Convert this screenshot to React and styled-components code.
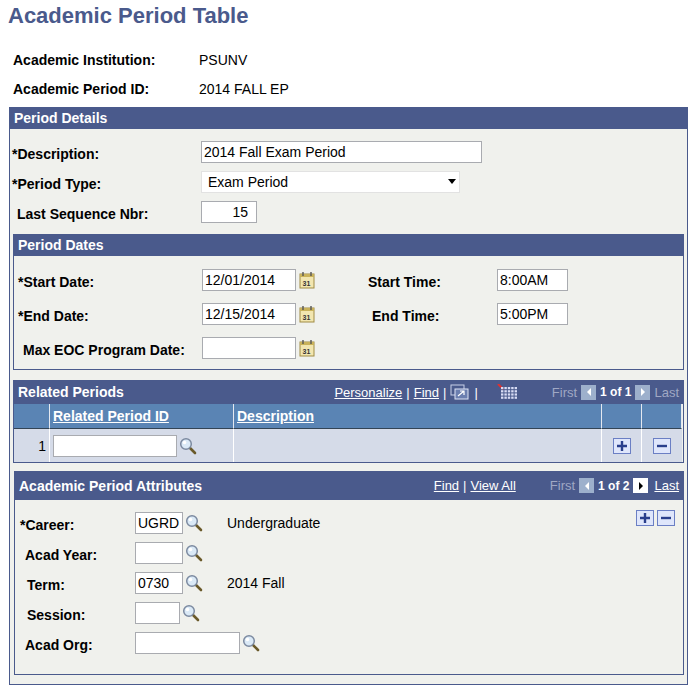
import React from "react";
import styled, { createGlobalStyle } from "styled-components";

const Global = createGlobalStyle`
  body { margin: 0; background: #fff; font-family: "Liberation Sans", Arial, sans-serif; color: #000; }
`;

const Page = styled.div`
  padding: 2px 0 0 9px;
  width: 679px;
`;

const Title = styled.h1`
  margin: 0 0 0 -1px;
  font-size: 22px;
  font-weight: bold;
  color: #4a5a8c;
  line-height: 28px;
`;

const KeyGrid = styled.div`
  display: grid;
  grid-template-columns: 186px auto;
  row-gap: 10px;
  padding: 21px 0 8px 4px;
  font-size: 14px;
  line-height: 19px;
`;

const Bold = styled.span`
  font-weight: bold;
`;

const Panel = styled.div`
  border: 1px solid #4a5a8c;
  border-top: none;
  background: #f0f1ed;
  margin: ${(p) => p.$margin || "0"};
  padding-bottom: ${(p) => p.$pb || "0"};
`;

const Bar = styled.div`
  background: #4a5a8c;
  color: #fff;
  font-weight: bold;
  font-size: 14px;
  height: ${(p) => p.$h || 22}px;
  display: flex;
  align-items: center;
  padding: 0 4px;
  font-size: 14px;
`;

const BarRight = styled.div`
  margin-left: auto;
  display: flex;
  align-items: center;
  gap: 4px;
  font-weight: normal;
  font-size: 13px;
`;

const Link = styled.span`
  text-decoration: underline;
  color: ${(p) => p.$c || "#fff"};
`;

const Dim = styled.span`
  color: #a0a8c4;
`;

const Form = styled.div`
  display: grid;
  grid-template-columns: ${(p) => p.$cols};
  align-items: center;
  row-gap: ${(p) => p.$gap || 8}px;
  padding: ${(p) => p.$pad};
  font-size: 14px;
`;

const Label = styled.div`
  font-weight: bold;
  padding-left: ${(p) => p.$indent || 0}px;
  padding-top: 4px;
`;

const Input = styled.div`
  width: ${(p) => p.$w}px;
  height: 22px;
  box-sizing: border-box;
  border: 1px solid #a9abb0;
  background: #fff;
  padding: 0 2px;
  display: flex;
  align-items: center;
  justify-content: ${(p) => (p.$right ? "flex-end" : "flex-start")};
  padding-right: ${(p) => (p.$right ? 8 : 2)}px;
  font-size: 14px;
`;

const Select = styled(Input)`
  border-color: #e2e2e2;
  padding-left: 6px;
  justify-content: space-between;
`;

const Cell = styled.div`
  display: flex;
  align-items: center;
  gap: ${(p) => p.$gap || 3}px;
`;

const Inner = styled.div`
  margin: 0 3px 0 3px;
  border: 1px solid #4a5a8c;
  border-top: none;
`;

const GridTable = styled.div`
  display: grid;
  grid-template-columns: 36px 184px 368px 40px 40px;
  font-size: 14px;
`;

const Th = styled.div`
  background: #5a84b4;
  height: 24px;
  border-right: 1px solid #e4e8f0;
  border-bottom: 1px solid #345;
  display: flex;
  align-items: center;
  padding-left: 3px;
  font-weight: bold;
  &:last-child { border-right: none; }
`;

const Td = styled.div`
  background: #d5dbe8;
  height: 33px;
  border-right: 1px solid #fff;
  display: flex;
  align-items: center;
  justify-content: ${(p) => p.$j || "flex-start"};
  padding: 0 3px;
  &:last-child { border-right: none; }
`;

const SqBtn = styled.div`
  width: 18px;
  height: 16px;
  box-sizing: border-box;
  border: 1px solid #6b7fc4;
  background: #dfe6fb;
  display: flex;
  align-items: center;
  justify-content: center;
`;

const NavBtn = styled.div`
  width: 15px;
  height: 15px;
  background: ${(p) => (p.$on ? "#fff" : "#9db0cc")};
  display: flex;
  align-items: center;
  justify-content: center;
`;

const Lookup = () => (
  <svg width="18" height="18" viewBox="0 0 18 18">
    <line x1="10" y1="10" x2="16" y2="16" stroke="#6a5a2a" strokeWidth="2.6" strokeLinecap="round" />
    <circle cx="7" cy="7" r="5.3" fill="#dbeaf7" stroke="#7c8aa0" strokeWidth="1.5" />
    <circle cx="5.5" cy="5.5" r="1.8" fill="#fff" />
  </svg>
);

const Cal = () => (
  <svg width="16" height="18" viewBox="0 0 16 18">
    <rect x="1" y="3" width="14" height="14" fill="#f2e6b0" stroke="#a08c44" />
    <rect x="1" y="3" width="14" height="3" fill="#c9b25a" />
    <line x1="4" y1="1" x2="4" y2="5" stroke="#555" strokeWidth="1.4" />
    <line x1="12" y1="1" x2="12" y2="5" stroke="#555" strokeWidth="1.4" />
    <text x="3.5" y="15" fontSize="7" fontWeight="bold" fill="#333" fontFamily="Liberation Sans, sans-serif">31</text>
  </svg>
);

const Plus = () => (
  <SqBtn>
    <svg width="10" height="10" viewBox="0 0 10 10">
      <path d="M5 0v10M0 5h10" stroke="#2a3f8c" strokeWidth="2.4" />
    </svg>
  </SqBtn>
);
const Minus = () => (
  <SqBtn>
    <svg width="10" height="10" viewBox="0 0 10 10">
      <path d="M0 5h10" stroke="#2a3f8c" strokeWidth="2.4" />
    </svg>
  </SqBtn>
);

const Arrow = ({ dir, on }) => (
  <NavBtn $on={on}>
    <svg width="8" height="10" viewBox="0 0 8 10">
      <path d={dir === "l" ? "M6 1L2 5l4 4z" : "M2 1l4 4-4 4z"} fill={on ? "#000" : "#fff"} />
    </svg>
  </NavBtn>
);

const Date = ({ v }) => (
  <Cell>
    <Input $w={94}>{v}</Input>
    <Cal />
  </Cell>
);

const Look = ({ w, v, text }) => (
  <Cell $gap={2}>
    <Input $w={w}>{v}</Input>
    <Lookup />
    {text && <span style={{ marginLeft: 22 }}>{text}</span>}
  </Cell>
);

export default function App() {
  return (
    <Page>
      <Global />
      <Title>Academic Period Table</Title>
      <KeyGrid>
        <Bold>Academic Institution:</Bold>
        <span>PSUNV</span>
        <Bold>Academic Period ID:</Bold>
        <span>2014 FALL EP</span>
      </KeyGrid>
      <Panel $pb="5px">
        <Bar>Period Details</Bar>
        <Form $cols="189px auto" $pad="12px 0 11px 2px">
          <Label>*Description:</Label>
          <Input $w={281}>2014 Fall Exam Period</Input>
          <Label>*Period Type:</Label>
          <Select $w={259}>
            Exam Period
            <svg width="10" height="6" viewBox="0 0 10 6"><path d="M1 0h8L5 5z" fill="#000" /></svg>
          </Select>
          <Label $indent={5}>Last Sequence Nbr:</Label>
          <Input $w={56} $right>15</Input>
        </Form>
        <Inner style={{ marginBottom: 10 }}>
          <Bar>Period Dates</Bar>
          <Form $cols="184px 166px 129px auto" $gap={12} $pad="13px 0 10px 4px">
            <Label>*Start Date:</Label>
            <Date v="12/01/2014" />
            <Label>Start Time:</Label>
            <Input $w={71}>8:00AM</Input>
            <Label>*End Date:</Label>
            <Date v="12/15/2014" />
            <Label $indent={4}>End Time:</Label>
            <Input $w={71}>5:00PM</Input>
            <Label $indent={5}>Max EOC Program Date:</Label>
            <Date v="" />
          </Form>
        </Inner>
        <Inner style={{ marginBottom: 8 }}>
          <Bar $h={24}>
            Related Periods
            <BarRight>
              <Link>Personalize</Link> | <Link>Find</Link> |
              <svg width="20" height="16" viewBox="0 0 20 16">
                <rect x="1" y="1" width="13" height="10" fill="none" stroke="#c8d0e8" />
                <rect x="5" y="5" width="13" height="10" fill="#6c7fb0" stroke="#dde4f5" />
                <path d="M8 12l6-5M10 7h4v4" stroke="#fff" strokeWidth="1.2" fill="none" />
              </svg>
              |
              <svg width="22" height="16" viewBox="0 0 22 16" style={{ marginLeft: 14 }}>
                <path d="M2 0l5 5" stroke="#e03030" strokeWidth="2" />
                <g fill="#d8dcf5">
                  {[0, 1, 2, 3].map((r) => [0, 1, 2, 3, 4].map((c) => (
                    <rect key={r + "-" + c} x={5 + c * 3.4} y={3 + r * 3.2} width="2.4" height="2.2" />
                  )))}
                </g>
              </svg>
              <Dim style={{ marginLeft: 30 }}>First</Dim>
              <Arrow dir="l" />
              <Bold style={{ fontSize: 12 }}>1 of 1</Bold>
              <Arrow dir="r" />
              <Dim>Last</Dim>
            </BarRight>
          </Bar>
          <GridTable>
            <Th />
            <Th><Link>Related Period ID</Link></Th>
            <Th><Link>Description</Link></Th>
            <Th />
            <Th />
            <Td $j="flex-end">1</Td>
            <Td><Look w={124} /></Td>
            <Td />
            <Td $j="center"><Plus /></Td>
            <Td $j="center"><Minus /></Td>
          </GridTable>
        </Inner>
        <Inner style={{ marginLeft: 4, marginRight: 3, position: "relative" }}>
          <Bar $h={29}>
            Academic Period Attributes
            <BarRight>
              <Link>Find</Link> | <Link>View All</Link>
              <Dim style={{ marginLeft: 30 }}>First</Dim>
              <Arrow dir="l" />
              <Bold style={{ fontSize: 12 }}>1 of 2</Bold>
              <Arrow dir="r" on />
              <Link style={{ marginLeft: 2 }}>Last</Link>
            </BarRight>
          </Bar>
          <Cell style={{ position: "absolute", right: 8, top: 39 }}>
            <Plus />
            <Minus />
          </Cell>
          <Form $cols="115px auto" $gap={8} $pad="12px 0 20px 5px">
            <Label>*Career:</Label>
            <Look w={48} v="UGRD" text="Undergraduate" />
            <Label $indent={5}>Acad Year:</Label>
            <Look w={48} />
            <Label $indent={7}>Term:</Label>
            <Look w={48} v="0730" text="2014 Fall" />
            <Label $indent={7}>Session:</Label>
            <Look w={45} />
            <Label $indent={5}>Acad Org:</Label>
            <Look w={105} />
          </Form>
        </Inner>
        <div style={{ height: 4 }} />
      </Panel>
    </Page>
  );
}
